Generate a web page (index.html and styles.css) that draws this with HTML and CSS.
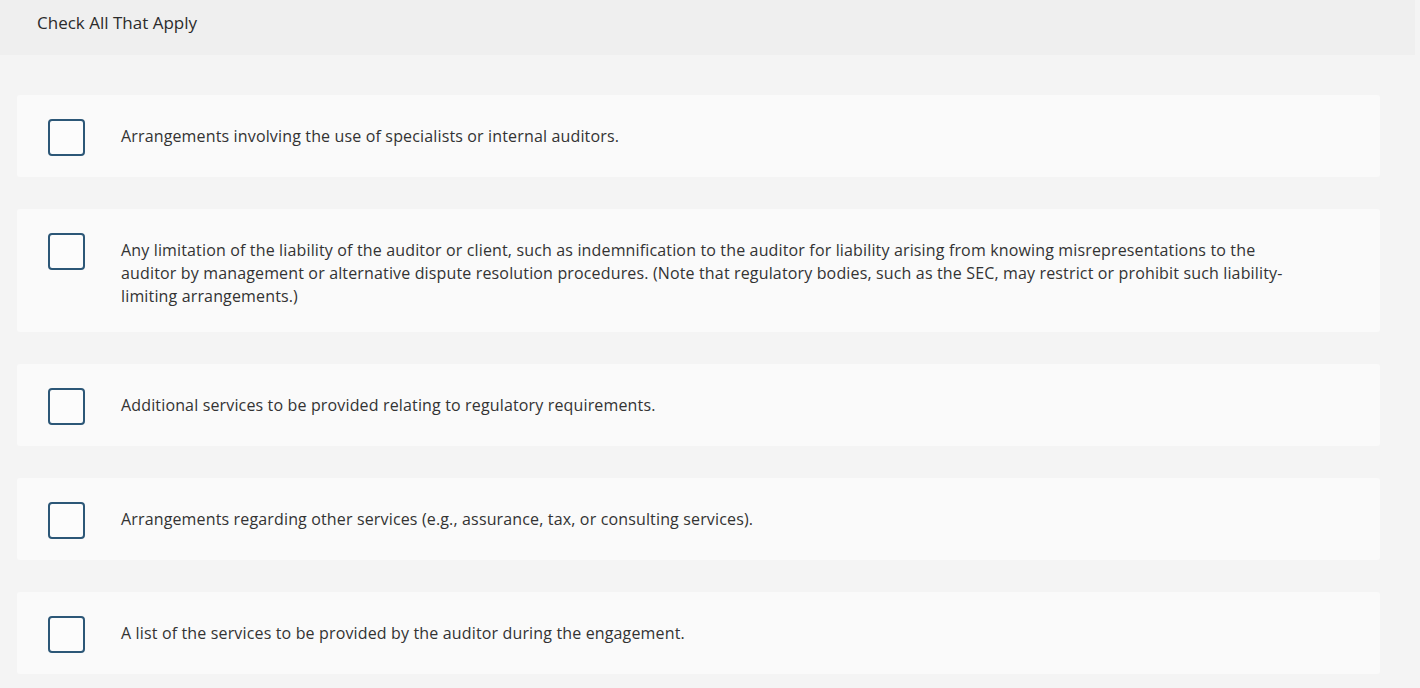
FILE: index.html
```html
<!DOCTYPE html>
<html lang="en">
<head>
<meta charset="utf-8">
<title>Check All That Apply</title>
<link rel="stylesheet" href="styles.css">
</head>
<body>
<header class="prompt">Check All That Apply</header>
<main class="choices">
  <label class="choice"><span class="box"></span><span class="text">Arrangements involving the use of specialists or internal auditors.</span></label>
  <label class="choice"><span class="box"></span><span class="text">Any limitation of the liability of the auditor or client, such as indemnification to the auditor for liability arising from knowing misrepresentations to the auditor by management or alternative dispute resolution procedures. (Note that regulatory bodies, such as the SEC, may restrict or prohibit such liability-limiting arrangements.)</span></label>
  <label class="choice"><span class="box"></span><span class="text">Additional services to be provided relating to regulatory requirements.</span></label>
  <label class="choice"><span class="box"></span><span class="text">Arrangements regarding other services (e.g., assurance, tax, or consulting services).</span></label>
  <label class="choice"><span class="box"></span><span class="text">A list of the services to be provided by the auditor during the engagement.</span></label>
</main>
</body>
</html>
```
FILE: styles.css
```css
html, body {
  margin: 0;
  padding: 0;
}
body {
  background: #f4f4f4;
  font-family: "Open Sans", Lato, sans-serif;
  color: #333;
  width: 1415px;
}
.prompt {
  display: block;
  background: #efefef;
  height: 55px;
  box-sizing: border-box;
  padding: 13px 0 0 37px;
  font-size: 17px;
  line-height: 20px;
  color: #2b2b2b;
}
.choices {
  display: flex;
  flex-direction: column;
  gap: 32px;
  padding: 40px 35px 0 17px;
}
.choice {
  display: flex;
  align-items: flex-start;
  background: #fafafa;
  border-radius: 3px;
  padding: 24px 0 21px 31px;
}
.box {
  flex: none;
  width: 37px;
  height: 37px;
  box-sizing: border-box;
  border: 2px solid #2c5777;
  border-radius: 4px;
  background: #fcfcfc;
}
.text {
  margin: 6px 0 3px 36px;
  max-width: 1168px;
  font-size: 16px;
  letter-spacing: 0.15px;
  line-height: 23px;
  color: #333;
}
```
